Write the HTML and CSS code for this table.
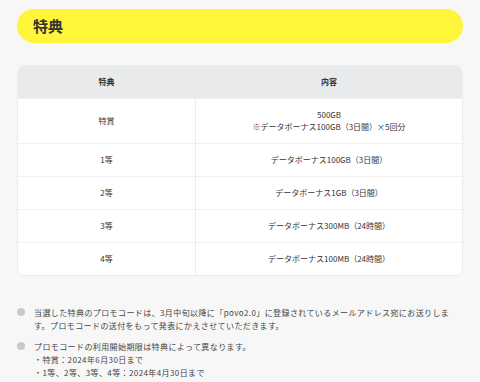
FILE: index.html
```html
<!DOCTYPE html>
<html lang="ja">
<head>
<meta charset="utf-8">
<link rel="stylesheet" href="styles.css">
</head>
<body>
<div class="page">
  <h2 class="heading">特典</h2>
  <div class="table-wrap">
    <table class="prize">
      <thead>
        <tr><th class="c1">特典</th><th>内容</th></tr>
      </thead>
      <tbody>
        <tr><td class="c1">特賞</td><td>500GB<br>※データボーナス100GB（3日間）×5回分</td></tr>
        <tr><td class="c1">1等</td><td>データボーナス100GB（3日間）</td></tr>
        <tr><td class="c1">2等</td><td>データボーナス1GB（3日間）</td></tr>
        <tr><td class="c1">3等</td><td>データボーナス300MB（24時間）</td></tr>
        <tr><td class="c1">4等</td><td>データボーナス100MB（24時間）</td></tr>
      </tbody>
    </table>
  </div>
  <ul class="notes">
    <li>当選した特典のプロモコードは、3月中旬以降に「povo2.0」に登録されているメールアドレス宛にお送りします。プロモコードの送付をもって発表にかえさせていただきます。</li>
    <li>プロモコードの利用開始期限は特典によって異なります。<br>・特賞：2024年6月30日まで<br>・1等、2等、3等、4等：2024年4月30日まで</li>
  </ul>
</div>
</body>
</html>
```
FILE: styles.css
```css
html, body {
  margin: 0;
  padding: 0;
  background: #f7f7f7;
}
body {
  font-family: "Noto Sans CJK JP", "Noto Sans", sans-serif;
  color: #333;
}
.page {
  padding: 9px 17px 0 17px;
}
.heading {
  margin: 0;
  height: 34px;
  background: #fff53a;
  border-radius: 17px;
  font-size: 15px;
  font-weight: 700;
  line-height: 34px;
  padding-left: 16px;
  color: #333;
}
.table-wrap {
  margin-top: 22px;
  background: #fff;
  border-radius: 8px;
  overflow: hidden;
  border: 1px solid #ececec;
}
.prize {
  width: 100%;
  border-collapse: collapse;
  font-size: 8px;
  line-height: 12px;
  text-align: center;
}
.prize th {
  background: #e9eaec;
  font-weight: 700;
  padding: 10px 4px;
  color: #333;
}
.prize td {
  padding: 10px 4px;
  border-top: 1px solid #f0f0f0;
  color: #333;
}
.prize .c1 {
  width: 40%;
  border-right: 1px solid #ececec;
}
.notes {
  list-style: none;
  margin: 30px 0 0 0;
  padding: 0;
  font-size: 8px;
  letter-spacing: 0.4px;
  line-height: 13px;
  color: #444;
}
.notes li {
  position: relative;
  padding-left: 17px;
  margin-bottom: 8px;
}
.notes li::before {
  content: "";
  position: absolute;
  left: 0;
  top: 2px;
  width: 8px;
  height: 8px;
  border-radius: 50%;
  background: #c9c9c9;
}
```
